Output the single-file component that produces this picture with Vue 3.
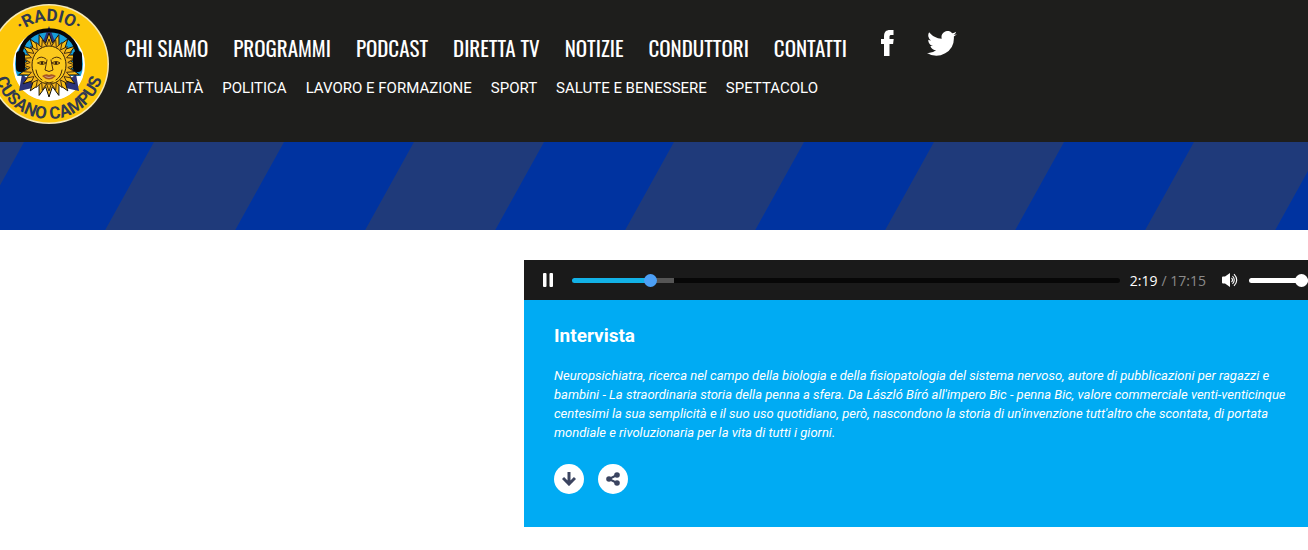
<template>
  <div class="page">
    <header class="site-header">
      <a href="#" class="logo" aria-label="Radio Cusano Campus">
        <svg viewBox="0 0 120 120" width="120" height="120">
          <defs>
            <path id="arc-top" d="M17 60 A43 43 0 0 1 103 60" />
            <path id="arc-bottom" d="M5 60 A55 55 0 0 0 115 60" />
          </defs>
          <circle cx="60" cy="60" r="60" fill="#f5e9b8" />
          <circle cx="60" cy="60" r="58.5" fill="#fdc70a" />
          <circle cx="60" cy="61" r="36" fill="#fff" />
          <circle cx="60" cy="60" r="34" fill="#179fda" />
          <path d="M26 72H94Q86 96 60 96T26 72Z" fill="#fff" />
          <path d="M60 22 68 43H52ZM30 87 33 70 48 83ZM90 87 87 70 72 83Z" fill="#2b3479" />
          <polygon :points="outerRays" fill="#f6bd18" stroke="#17140d" />
          <polygon :points="innerRays" fill="#f3b51c" stroke="#4a3210" />
          <path d="M31 54C32 17 88 17 89 54" fill="none" stroke="#060608" stroke-width="4" />
          <rect x="27" y="47" width="9" height="21" rx="4" fill="#060608" />
          <rect x="84" y="47" width="9" height="21" rx="4" fill="#060608" />
          <ellipse cx="60" cy="61" rx="17" ry="19" fill="#fcc91d" stroke="#37250b" />
          <g fill="none" stroke="#4a2d0d" stroke-linecap="round">
            <path d="M48 55Q52 51 57 55M63 55Q68 51 72 55M58 56 56 66Q60 69 64 66L62 56" />
            <path d="M49 59Q53 56 57 59Q53 62 49 59ZM63 59Q67 56 71 59Q67 62 63 59Z" />
            <path d="M47 66Q48 73 53 76M73 66Q72 73 67 76M56 78Q60 80 64 78" />
          </g>
          <circle cx="53" cy="59" r="1.200" fill="#33200c" />
          <circle cx="67" cy="59" r="1.200" fill="#33200c" />
          <path d="M53 72Q57 69 60 71Q63 69 67 72Q60 79 53 72Z" fill="#a85622" />
          <path d="M55 72Q60 74 65 72Q60 75 55 72Z" fill="#fff" />
          <text class="logo-text">
            <textPath href="#arc-top" startOffset="50%" text-anchor="middle">·RADIO·</textPath>
          </text>
          <text class="logo-text">
            <textPath href="#arc-bottom" startOffset="50%" text-anchor="middle">CUSANO CAMPUS</textPath>
          </text>
        </svg>
      </a>

      <div class="menus">
        <div class="top-row">
          <nav class="main-nav" aria-label="Principale">
            <a v-for="item in mainMenu" :key="item" href="#">{{ item }}</a>
          </nav>
          <div class="social">
            <a href="#" aria-label="Facebook">
              <svg viewBox="0 0 14 26" width="14" height="26" fill="#fff">
                <path d="M3 26V14H0V9h3V6.500C3 2 5 0 9 0H12.500v5h-2C9 5 8.500 5.500 8.500 6.600V9h4.200l-.6 5H8.500v12Z" />
              </svg>
            </a>
            <a href="#" aria-label="Twitter">
              <svg viewBox="0 0 24 20" width="30" height="25" fill="#fff">
                <path d="M24 2.400c-.9.400-1.800.7-2.800.8 1-.6 1.800-1.600 2.100-2.700-.9.600-2 1-3.100 1.200A4.900 4.900 0 0 0 11.800 6.200C7.700 6 4.100 4 1.700 1a4.900 4.900 0 0 0 1.500 6.600c-.8 0-1.600-.2-2.200-.6v.1c0 2.400 1.700 4.400 3.900 4.800-.7.200-1.500.2-2.200.1.600 2 2.400 3.400 4.600 3.400A9.900 9.900 0 0 1 0 17.500 14 14 0 0 0 21.500 5v-.6c1-.7 1.800-1.200 2.500-2Z" />
              </svg>
            </a>
          </div>
        </div>
        <nav class="sub-nav" aria-label="Categorie">
          <a v-for="item in subMenu" :key="item" href="#">{{ item }}</a>
        </nav>
      </div>
    </header>

    <svg class="stripes" aria-hidden="true">
      <defs>
        <pattern id="stripe" x="24" width="260" height="88" patternUnits="userSpaceOnUse" patternTransform="skewX(-29)">
          <rect width="260" height="88" fill="#0033a0" />
          <rect x="130" width="130" height="88" fill="#1f3a7a" />
        </pattern>
      </defs>
      <rect width="100%" height="100%" fill="url(#stripe)" />
    </svg>

    <main class="content">
      <article class="episode">
        <div class="player">
          <button class="pause" type="button" aria-label="Pausa" @click="playing = !playing">
            <svg viewBox="0 0 10 14" width="10" height="14" fill="#fff">
              <template v-if="playing">
                <rect width="3.500" height="14" rx="1" />
                <rect x="6.500" width="3.500" height="14" rx="1" />
              </template>
              <path v-else d="M0 0 10 7 0 14Z" />
            </svg>
          </button>
          <input
            v-model.number="position"
            class="seek"
            type="range"
            min="0"
            :max="duration"
            aria-label="Posizione"
            :style="{ '--played': playedPercent + '%' }"
          />
          <div class="time">
            <span>{{ formatTime(position) }}</span>
            <span class="total">/ {{ formatTime(duration) }}</span>
          </div>
          <button class="mute" type="button" aria-label="Volume">
            <svg viewBox="0 0 16 14" width="16" height="14">
              <path d="M0 4.500Q0 3.500 1 3.500H3L8 0V14L3 10.500H1Q0 10.500 0 9.500Z" fill="#fff" />
              <path d="M9.500 5Q11.500 7 9.500 9M10.500 3Q14 7 10.500 11M12 1.200Q17.500 7 12 12.800" fill="none" stroke="#fff" stroke-width="1.100" />
            </svg>
          </button>
          <input v-model.number="volume" class="volume" type="range" min="0" max="100" aria-label="Livello volume" />
        </div>

        <div class="details">
          <h2>Intervista</h2>
          <p>{{ description }}</p>
          <div class="actions">
            <a href="#" aria-label="Scarica">
              <svg viewBox="0 0 14 14" width="14" height="14" fill="none" stroke="#3b4460" stroke-width="3">
                <path d="M7 0V12M1 6 7 12 13 6" />
              </svg>
            </a>
            <a href="#" aria-label="Condividi">
              <svg viewBox="0 0 14 14" width="14" height="14" fill="#3b4460">
                <path d="M11 3 3 7 11 11" fill="none" stroke="#3b4460" stroke-width="2" />
                <circle cx="11" cy="3" r="2.800" />
                <circle cx="3" cy="7" r="2.800" />
                <circle cx="11" cy="11" r="2.800" />
              </svg>
            </a>
          </div>
        </div>
      </article>
    </main>
  </div>
</template>

<script setup>
import { computed, ref } from 'vue'

const mainMenu = ['CHI SIAMO', 'PROGRAMMI', 'PODCAST', 'DIRETTA TV', 'NOTIZIE', 'CONDUTTORI', 'CONTATTI']
const subMenu = ['ATTUALITÀ', 'POLITICA', 'LAVORO E FORMAZIONE', 'SPORT', 'SALUTE E BENESSERE', 'SPETTACOLO']

const description =
  "Neuropsichiatra, ricerca nel campo della biologia e della fisiopatologia del sistema nervoso, autore di pubblicazioni per ragazzi e bambini - La straordinaria storia della penna a sfera. Da László Bíró all'impero Bic - penna Bic, valore commerciale venti-venticinque centesimi la sua semplicità e il suo uso quotidiano, però, nascondono la storia di un'invenzione tutt'altro che scontata, di portata mondiale e rivoluzionaria per la vita di tutti i giorni."

const playing = ref(true)
const duration = 1035
const position = ref(139)
const volume = ref(100)

const playedPercent = computed(() => (position.value / duration) * 100)

const formatTime = (seconds) => {
  return Math.floor(seconds / 60) + ':' + String(seconds % 60).padStart(2, '0')
}

// Points of a star around the face in the logo
const star = (count, outer, inner) => {
  const points = []
  for (let i = 0; i < count * 2; i++) {
    const radius = i % 2 ? inner : outer
    const angle = (Math.PI * i) / count - Math.PI / 2
    points.push(`${60 + radius * Math.cos(angle)},${61 + radius * Math.sin(angle)}`)
  }
  return points.join(' ')
}
const outerRays = star(20, 32, 22)
const innerRays = star(24, 26, 19)
</script>

<style>
body {
  margin: 0;
  background: #fff;
}
</style>

<style scoped>
.page {
  overflow: hidden;
  font-family: Roboto, sans-serif;
}

a {
  color: #fff;
  text-decoration: none;
}

svg {
  display: block;
}

.site-header {
  display: flex;
  gap: 16px;
  box-sizing: border-box;
  min-height: 142px;
  padding-top: 4px;
  background: #1e1e1c;
}

.logo {
  flex: none;
  margin-left: -11px;
}

.logo-text {
  font: bold 17px Roboto, sans-serif;
  fill: #30394f;
}

.menus {
  padding-top: 24px;
}

.top-row {
  display: flex;
  gap: 34px;
}

.main-nav {
  display: flex;
  gap: 25px;
  padding-top: 4px;
  font: 21px/32px Oswald, "Liberation Sans Narrow", Roboto, sans-serif;
  white-space: nowrap;
}

.social {
  display: flex;
  align-items: center;
  gap: 32px;
  height: 30px;
}

.sub-nav {
  display: flex;
  gap: 19px;
  padding: 14px 0 0 2px;
  font-size: 15px;
  line-height: 20px;
  white-space: nowrap;
}

.stripes {
  width: 100%;
  height: 88px;
}

.content {
  margin-left: 524px;
  padding-top: 30px;
}

.player {
  display: flex;
  align-items: center;
  height: 40px;
  padding-left: 19px;
  background: #1a1a1a;
}

button {
  padding: 0;
  border: 0;
  background: none;
}

.pause {
  margin-right: 19px;
}

input[type='range'] {
  appearance: none;
  height: 5px;
  margin: 0;
  border-radius: 3px;
}

input[type='range']::-webkit-slider-thumb {
  appearance: none;
  width: 13px;
  height: 13px;
  border-radius: 50%;
  background: #fff;
}

.seek {
  flex: 1;
  min-width: 0;
  background: linear-gradient(90deg, #12b2e7 var(--played), #555 var(--played), #555 102px, #070707 102px);
}

.seek::-webkit-slider-thumb {
  background: #4c9ff5 !important;
}

.time {
  display: flex;
  gap: 4px;
  margin: 1px 16px 0 10px;
  font: 14px/20px "Open Sans", sans-serif;
  color: #fff;
}

.total {
  color: #8b8b8b;
}

.mute {
  margin-right: 11px;
}

.volume {
  width: 59px;
  background: #fff;
}

.details {
  padding: 24px 20px 33px 30px;
  background: #00abf3;
  color: #fff;
}

h2 {
  margin: 0;
  font-size: 19px;
  line-height: 24px;
}

p {
  margin: 18px 0 22px;
  font-size: 13px;
  font-style: italic;
  line-height: 19px;
}

.actions {
  display: flex;
  gap: 14px;
}

.actions a {
  display: grid;
  place-items: center;
  width: 30px;
  height: 30px;
  border-radius: 50%;
  background: #fff;
}
</style>
